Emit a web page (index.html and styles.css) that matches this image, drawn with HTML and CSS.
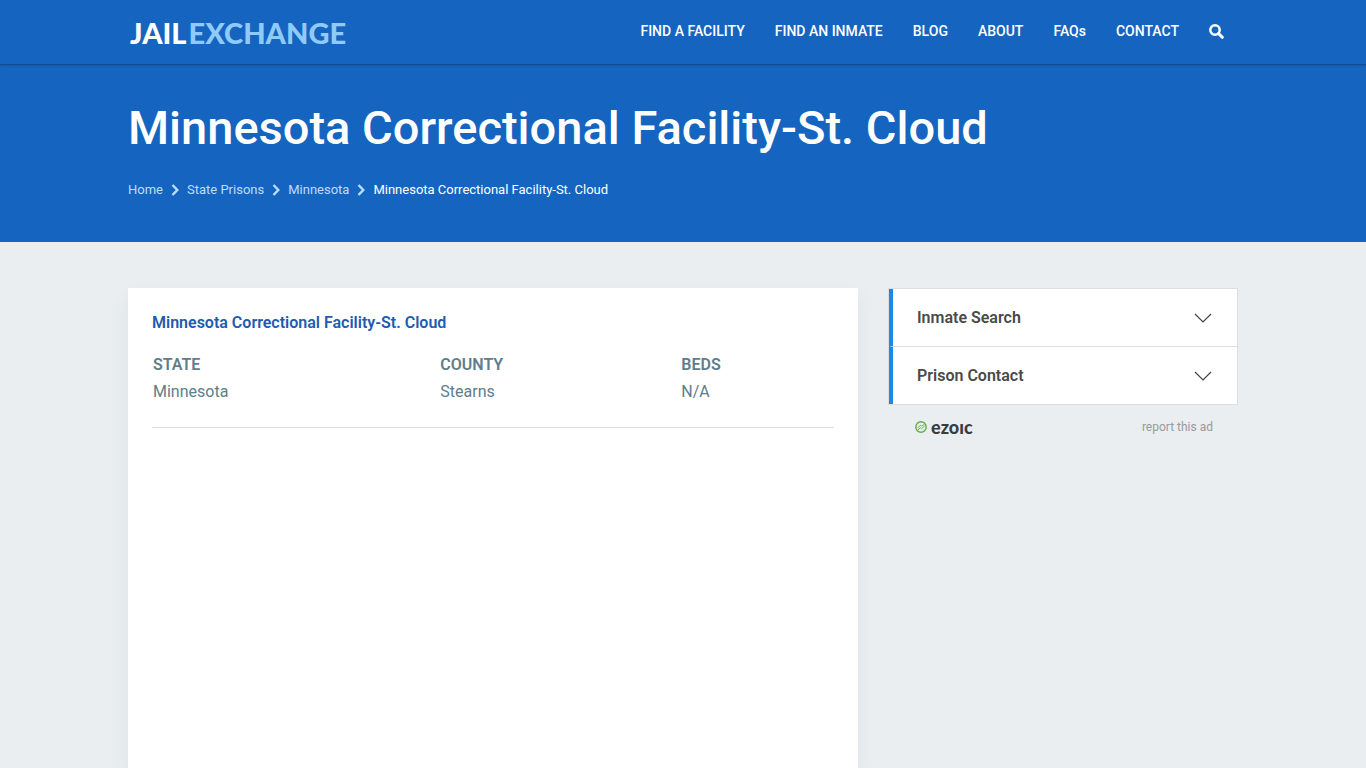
FILE: index.html
```html
<!DOCTYPE html>
<html lang="en">

<head>
    <meta charset="utf-8">
    <meta name="viewport" content="width=device-width, initial-scale=1">
    <title>Minnesota Correctional Facility-St. Cloud</title>
    <link rel="stylesheet" href="styles.css">
</head>

<body>
    <header class="site-header">
        <div class="container header-inner">
            <a href="#" class="logo">JAIL<span>EXCHANGE</span></a>
            <nav class="main-nav">
                <a href="#">FIND A FACILITY</a>
                <a href="#">FIND AN INMATE</a>
                <a href="#">BLOG</a>
                <a href="#">ABOUT</a>
                <a href="#">FAQs</a>
                <a href="#">CONTACT</a>
                <button type="button" class="search-btn" aria-label="Search">
                    <svg width="15" height="15" viewBox="0 0 15 15" fill="none" stroke="currentColor">
                        <circle cx="6" cy="6" r="4.7" stroke-width="2.5" />
                        <path d="M9.6 9.6L13.3 13.3" stroke-width="3" stroke-linecap="round" />
                    </svg>
                </button>
            </nav>
        </div>
    </header>

    <section class="hero">
        <div class="container">
            <h1>Minnesota Correctional Facility-St. Cloud</h1>
            <nav class="breadcrumb" aria-label="Breadcrumb">
                <a href="#">Home</a>
                <svg class="sep" viewBox="0 0 8 12"><path d="M1.5 1L6.3 6L1.5 11" /></svg>
                <a href="#">State Prisons</a>
                <svg class="sep" viewBox="0 0 8 12"><path d="M1.5 1L6.3 6L1.5 11" /></svg>
                <a href="#">Minnesota</a>
                <svg class="sep" viewBox="0 0 8 12"><path d="M1.5 1L6.3 6L1.5 11" /></svg>
                <span>Minnesota Correctional Facility-St. Cloud</span>
            </nav>
        </div>
    </section>

    <main class="container content">
        <article class="card">
            <h2>Minnesota Correctional Facility-St. Cloud</h2>
            <table class="facts">
                <thead>
                    <tr>
                        <th scope="col">STATE</th>
                        <th scope="col">COUNTY</th>
                        <th scope="col">BEDS</th>
                    </tr>
                </thead>
                <tbody>
                    <tr>
                        <td>Minnesota</td>
                        <td>Stearns</td>
                        <td>N/A</td>
                    </tr>
                </tbody>
            </table>
            <hr>
        </article>

        <aside class="sidebar">
            <div class="accordion">
                <button type="button" aria-expanded="false">
                    Inmate Search
                    <svg class="chevron" viewBox="0 0 18 10"><path d="M1 1L9 9L17 1" /></svg>
                </button>
                <button type="button" aria-expanded="false">
                    Prison Contact
                    <svg class="chevron" viewBox="0 0 18 10"><path d="M1 1L9 9L17 1" /></svg>
                </button>
            </div>
            <div class="ad-footer">
                <a href="#" class="ezoic">
                    <svg width="12" height="12" viewBox="0 0 12 12" fill="none" stroke="#5fad41">
                        <circle cx="6" cy="6" r="5.2" stroke-width="1.4" />
                        <path d="M2.4 7L5.6 4.2L6.6 5.2L9.4 3.2M2.8 8.9L5.4 6.8L6.5 7.8L9.6 5" stroke-width="0.9" />
                    </svg>
                    ezoıc
                </a>
                <a href="#" class="report">report this ad</a>
            </div>
        </aside>
    </main>
</body>

</html>
```
FILE: styles.css
```css
* {
    box-sizing: border-box;
}

body {
    margin: 0;
    min-height: 100vh;
    display: flex;
    flex-direction: column;
    background-color: #eaeef1;
    color: #607d8b;
    font-family: Roboto, "Liberation Sans", sans-serif;
    font-size: 16px;
}

a {
    color: inherit;
    text-decoration: none;
}

button {
    border: 0;
    background: none;
    font: inherit;
    color: inherit;
    cursor: pointer;
}

.container {
    width: 100%;
    max-width: 1140px;
    margin: 0 auto;
    padding: 0 15px;
}

/* header */
.site-header {
    position: relative;
    background-color: #1565c0;
    border-bottom: 1px solid #0f4c94;
    box-shadow: 0 1px 2px rgba(0, 0, 0, 0.15);
    color: #fff;
}

.header-inner {
    display: flex;
    justify-content: space-between;
    align-items: center;
    height: 64px;
    padding-bottom: 2px;
}

.logo {
    display: flex;
    gap: 2px;
    padding: 4px 2px 0;
    font-family: Lato, "Open Sans", sans-serif;
    font-size: 29px;
    font-weight: 900;
    line-height: 38px;
}

.logo span {
    color: #90caf9;
}

.main-nav {
    display: flex;
    align-items: center;
    gap: 30px;
    padding-right: 14px;
    font-size: 14px;
    font-weight: 500;
    line-height: 20px;
}

.search-btn {
    display: flex;
    padding: 0;
}

/* title band */
.hero {
    padding: 32px 0 42px;
    background-color: #1565c0;
    color: #fff;
}

.hero h1 {
    margin: 0 0 21px;
    font-size: 47px;
    font-weight: 500;
    line-height: 62px;
}

.breadcrumb {
    display: flex;
    align-items: center;
    gap: 8px;
    font-size: 13px;
    line-height: 20px;
}

.breadcrumb a {
    color: #bbdefb;
}

.sep {
    width: 8px;
    height: 12px;
    fill: none;
    stroke: #bbdefb;
    stroke-width: 2.4;
}

/* content */
.content {
    flex: 1;
    display: flex;
    gap: 30px;
    padding-top: 46px;
}

.card {
    flex: 1;
    padding: 24px;
    background-color: #fff;
    box-shadow: 0 8px 16px rgba(50, 80, 100, 0.07);
}

.card h2 {
    margin: 0 0 17px;
    color: #1e5bb0;
    font-size: 16px;
    font-weight: 600;
    line-height: 22px;
}

.facts {
    width: 100%;
    border-collapse: collapse;
    line-height: 25px;
}

.facts th,
.facts td {
    padding: 1px;
    text-align: left;
}

.facts th {
    font-weight: 600;
}

.card hr {
    margin: 22px 0 0;
    border: 0;
    border-top: 1px solid #dde1e4;
}

/* sidebar */
.sidebar {
    flex: 0 0 350px;
}

.accordion {
    border: 1px solid #dcdfe2;
}

.accordion button {
    display: flex;
    justify-content: space-between;
    align-items: center;
    width: 100%;
    height: 57px;
    padding: 0 25px 0 24px;
    background-color: #fff;
    border-left: 4px solid #1e88e5;
    color: #4a4a4a;
    font-weight: 600;
}

.accordion button + button {
    height: 58px;
    border-top: 1px solid #dcdfe2;
}

.chevron {
    width: 18px;
    height: 10px;
    fill: none;
    stroke: #444;
    stroke-width: 1.2;
}

.ad-footer {
    display: flex;
    justify-content: space-between;
    padding: 12px 25px;
    line-height: 20px;
}

.ezoic {
    display: flex;
    align-items: center;
    gap: 4px;
    padding: 0 2px;
    color: #3c3c3c;
    font-family: Lato, sans-serif;
    font-size: 18px;
    font-weight: 900;
}

.report {
    color: #999;
    font-size: 12px;
}
```
